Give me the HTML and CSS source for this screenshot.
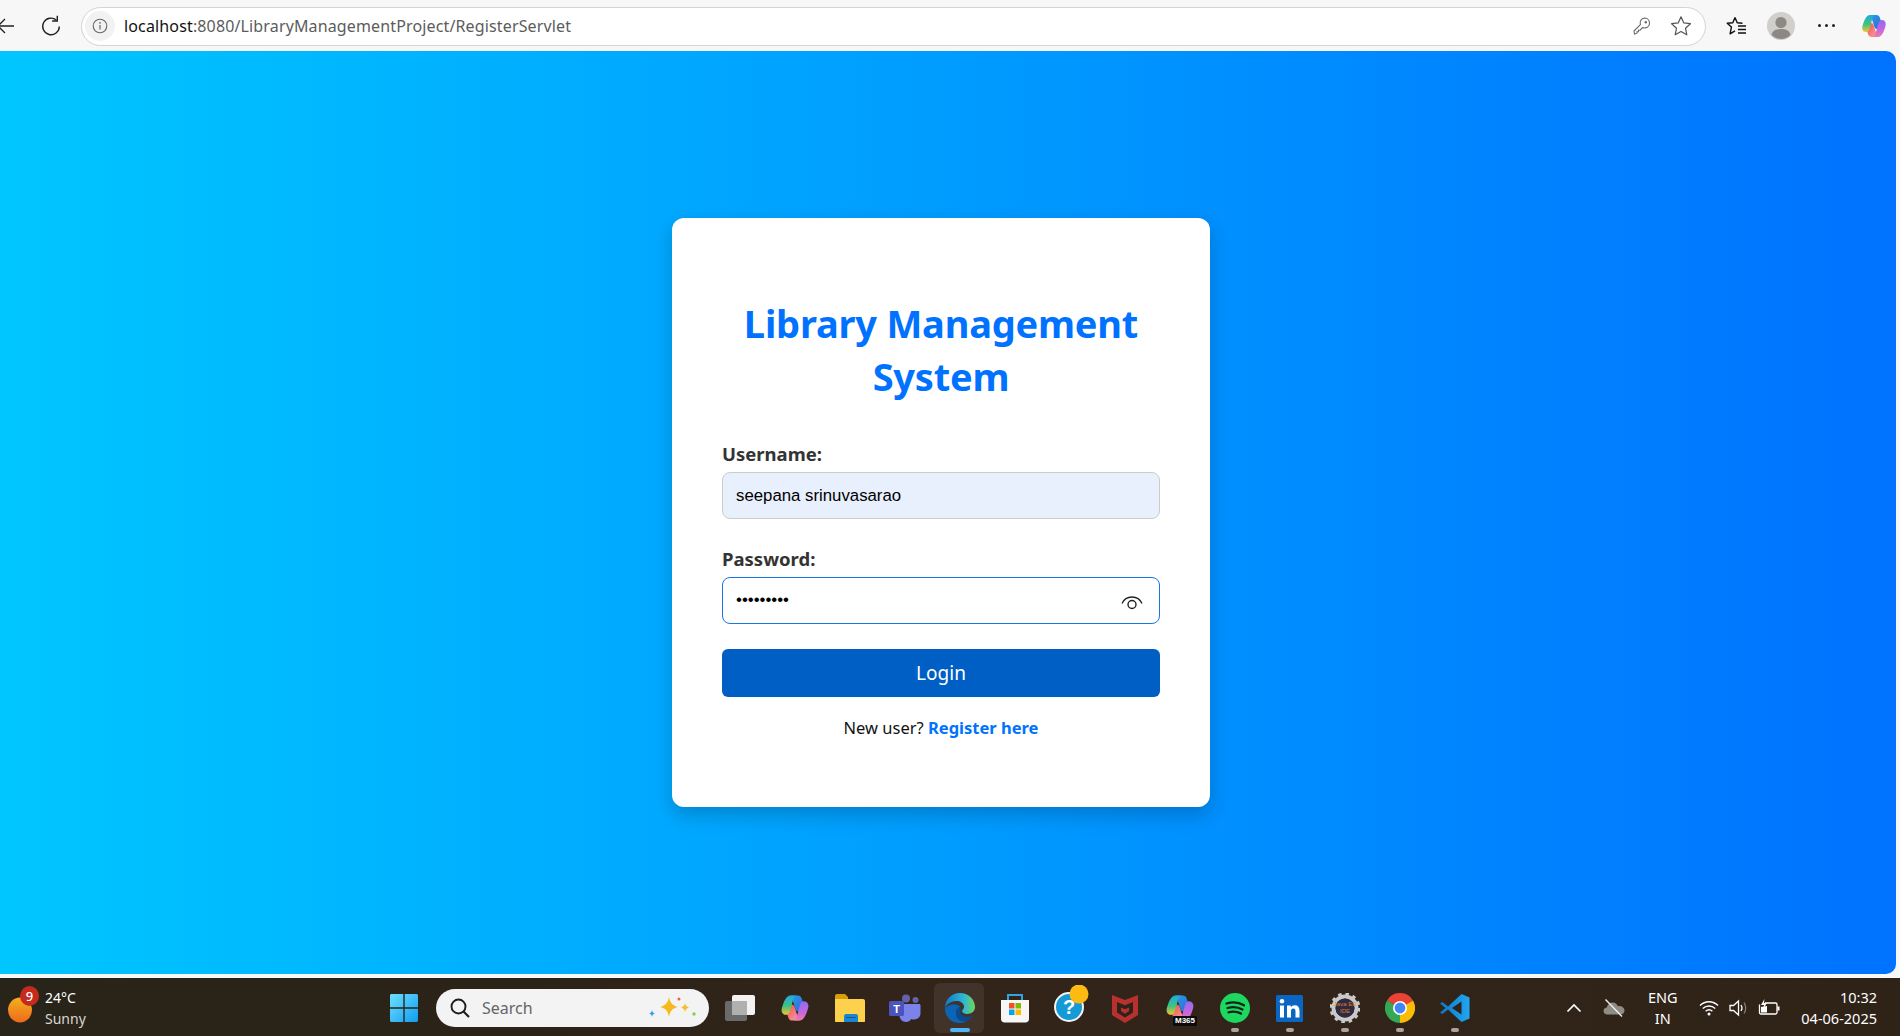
FILE: index.html
```html
<!DOCTYPE html>
<html lang="en">
<head>
<meta charset="utf-8">
<title>Library Management System</title>
<link rel="stylesheet" href="styles.css">
</head>
<body>
<svg class="defs" width="0" height="0">
  <defs>
    <linearGradient id="cop-left" x1="0" y1="0" x2="0" y2="1"><stop offset="0" stop-color="#1ea8e8"/><stop offset=".55" stop-color="#3fc47a"/><stop offset="1" stop-color="#f6c22e"/></linearGradient>
    <linearGradient id="cop-up" x1="0" y1="0" x2="1" y2="1"><stop offset="0" stop-color="#22a0ea"/><stop offset="1" stop-color="#3a5fd8"/></linearGradient>
    <linearGradient id="cop-right" x1="0" y1="0" x2="0" y2="1"><stop offset="0" stop-color="#8f6cf0"/><stop offset=".6" stop-color="#c766e0"/><stop offset="1" stop-color="#f27ba0"/></linearGradient>
    <linearGradient id="cop-low" x1="0" y1="0" x2="1" y2="1"><stop offset="0" stop-color="#ec4f3a"/><stop offset="1" stop-color="#f8a0b0"/></linearGradient>
    <linearGradient id="win" x1="0" y1="0" x2="1" y2="1"><stop offset="0" stop-color="#6fe0ff"/><stop offset="1" stop-color="#0f9cf0"/></linearGradient>
    <linearGradient id="sun" x1="0" y1="0" x2="0" y2="1"><stop offset="0" stop-color="#f2b01e"/><stop offset="1" stop-color="#ee6a1c"/></linearGradient>
    <linearGradient id="edge" x1="0" y1="0" x2="1" y2="0"><stop offset="0" stop-color="#1277c8"/><stop offset=".6" stop-color="#2cb5d8"/><stop offset="1" stop-color="#6fd65a"/></linearGradient>
    <linearGradient id="vs" x1="0" y1="0" x2="1" y2="0"><stop offset="0" stop-color="#0a78c8"/><stop offset="1" stop-color="#22a6f0"/></linearGradient>
    <g id="copilot">
      <path d="M10 2h6.500c1.700 0 2.800 1 3.300 2.500l3.200 10-6 1.500c-1.500 0-2.200-.8-2.600-2l-2.400-7.500C11.500 5 11 3.500 10 2z" fill="url(#cop-up)"/>
      <path d="M18 24h-6.500c-1.700 0-2.800-1-3.300-2.500L5 11.500l6-1.500c1.500 0 2.200.8 2.600 2l2.400 7.500c.5 1.500 1 3 2 4.500z" fill="url(#cop-low)"/>
      <path d="M10 2C6 2 4 8 2.500 13c-.8 3 .5 6 3.500 6 2 0 3-1.500 3.500-3l2.500-9c.5-2 1.500-5 3.500-5z" fill="url(#cop-left)"/>
      <path d="M18 24c4 0 6-6 7.500-11 .8-3-.5-6-3.500-6-2 0-3 1.500-3.500 3L16 19c-.5 2-1.500 5-3.500 5z" fill="url(#cop-right)"/>
    </g>
  </defs>
</svg>

<header class="toolbar">
  <button class="nav-btn back" aria-label="Back">
    <svg width="18" height="18" viewBox="0 0 18 18"><path d="M17 9H1M8 2 1 9l7 7" fill="none" stroke="#222" stroke-width="1.300"/></svg>
  </button>
  <button class="nav-btn reload" aria-label="Reload">
    <svg width="24" height="24" viewBox="0 0 24 24"><path d="M17.500 6.200A8.300 8.300 0 1 0 20.300 12.500" fill="none" stroke="#222" stroke-width="1.400"/><path d="M18.300 1.800V7h-5.200" fill="none" stroke="#222" stroke-width="1.400"/></svg>
  </button>
  <div class="address">
    <span class="site-info">
      <svg width="16" height="16" viewBox="0 0 16 16"><circle cx="8" cy="8" r="6.800" fill="none" stroke="#666" stroke-width="1.100"/><path d="M8 7v4.500" stroke="#666" stroke-width="1.200"/><circle cx="8" cy="4.800" r=".9" fill="#666"/></svg>
    </span>
    <span class="url"><span class="host">localhost</span>:8080/LibraryManagementProject/RegisterServlet</span>
    <span class="addr-icons">
      <svg width="20" height="20" viewBox="0 0 20 20"><path d="M12.500 2a5 5 0 0 1 1 9.900c-1 .2-2 0-2.800-.4L8 14.200H6.500v1.500H5v1.500L2.500 18 2 15l6.400-6.400A5 5 0 0 1 12.500 2z" fill="none" stroke="#6a6a6a" stroke-width="1.100"/><circle cx="13.800" cy="6.200" r="1.200" fill="#6a6a6a"/></svg>
      <svg width="22" height="22" viewBox="0 0 22 22"><path d="m11 1.800 2.800 6.100 6.600.8-4.900 4.500 1.300 6.600L11 16.500l-5.800 3.300 1.300-6.600L1.600 8.700l6.600-.8z" fill="none" stroke="#555" stroke-width="1.200" stroke-linejoin="round"/></svg>
    </span>
  </div>
  <div class="tool-icons">
    <svg class="fav" width="22" height="20" viewBox="0 0 22 20"><path d="m9 1.500 2.200 5.200 5.300.5M9 1.500 6.800 6.700l-5.600.6 4.200 3.800-1.300 6.800L9 14.800" fill="none" stroke="#111" stroke-width="1.400" stroke-linejoin="round"/><path d="M12 10h8M12 13.500h8M12 17h8" stroke="#111" stroke-width="1.400"/></svg>
    <svg class="avatar" width="28" height="28" viewBox="0 0 28 28"><circle cx="14" cy="14" r="14" fill="#d0cfcb"/><circle cx="14" cy="10.500" r="5.600" fill="#8c8985"/><path d="M4.500 23c1-4.500 4.500-6 9.500-6s8.500 1.500 9.500 6a13.500 13.500 0 0 1-19 0z" fill="#8c8985"/></svg>
    <span class="more"><i></i><i></i><i></i></span>
    <svg class="copilot-top" width="28" height="28" viewBox="0 0 28 26"><use href="#copilot"/></svg>
  </div>
</header>

<main class="page">
  <section class="card">
    <h1 class="title">Library Management System</h1>
    <form class="form">
      <div class="field">
        <label class="label" for="u">Username:</label>
        <input class="input autofilled" id="u" type="text" value="seepana srinuvasarao">
      </div>
      <div class="field">
        <label class="label" for="p">Password:</label>
        <div class="pw-wrap">
          <input class="input focused" id="p" type="password" value="srinu1234">
          <svg class="eye" width="22" height="16" viewBox="0 0 22 16"><path d="M1 8.500C3 4 7 2 11 2s8 2 10 6.500" fill="none" stroke="#222" stroke-width="1.300"/><circle cx="11" cy="9.500" r="4" fill="none" stroke="#222" stroke-width="1.400"/></svg>
        </div>
      </div>
      <button class="login" type="button">Login</button>
    </form>
    <p class="register">New user? <a href="#" class="register-link">Register here</a></p>
  </section>
</main>
<div class="strip"></div>

<footer class="taskbar">
  <div class="weather">
    <span class="sun-wrap">
      <svg width="24" height="26" viewBox="0 0 24 26"><ellipse cx="12" cy="13" rx="12" ry="12.500" fill="url(#sun)"/></svg>
      <b class="badge">9</b>
    </span>
    <span class="weather-text"><span class="temp">24°C</span><span class="cond">Sunny</span></span>
  </div>

  <span class="slot">
    <svg width="30" height="30" viewBox="0 0 30 30"><path d="M1 2.500C1 1.700 1.700 1 2.500 1H14.300v13.300H1zM15.700 1h11.800c.8 0 1.500.7 1.500 1.500v11.800H15.700zM1 15.700h13.300V29H2.500C1.700 29 1 28.300 1 27.500zM15.700 15.700H29v11.800c0 .8-.7 1.500-1.500 1.500H15.700z" fill="url(#win)"/></svg>
  </span>

  <div class="search">
    <svg width="22" height="22" viewBox="0 0 22 22"><circle cx="9.500" cy="9.500" r="7" fill="none" stroke="#1d1d1d" stroke-width="1.900"/><path d="m14.500 14.500 5.500 5.500" stroke="#1d1d1d" stroke-width="2.100"/></svg>
    <span class="search-text">Search</span>
    <svg class="sparkle" width="56" height="32" viewBox="0 0 50 32"><path d="M21 5c1 5.500 3 8 8.500 10-5.500 1.500-7.500 4.500-8.500 10-1-5.500-3-8.500-8.500-10C18 13 20 10.500 21 5z" fill="#f7b81e"/><path d="M37 11c.5 2.500 1.500 3.500 4 4.500-2.500 1-3.500 2-4 4.500-.5-2.500-1.500-3.500-4-4.500 2.500-1 3.500-2 4-4.500z" fill="#f4c030"/><path d="M4 18c.3 2 1 2.800 3 3.500-2 .7-2.700 1.500-3 3.500-.3-2-1-2.800-3-3.500 2-.7 2.700-1.500 3-3.500z" fill="#2aa3ee"/><circle cx="31" cy="7" r="1.500" fill="#e8663a"/><circle cx="46" cy="22" r="1.700" fill="#8cc84b"/></svg>
  </div>

  <div class="apps">
    <span class="slot">
      <svg width="32" height="32" viewBox="0 0 32 32"><rect x="1" y="9" width="22" height="20" rx="2" fill="#6a6a6a"/><rect x="8" y="3" width="23" height="20" rx="2" fill="#f2f2f2"/><rect x="8" y="9" width="15" height="14" fill="#b0b0b0"/></svg>
    </span>
    <span class="slot">
      <svg width="32" height="30" viewBox="0 0 28 26"><use href="#copilot"/></svg>
    </span>
    <span class="slot">
      <svg width="32" height="30" viewBox="0 0 32 30"><path d="M1 3c0-1 .7-2 2-2h8l3 3h0v5H1z" fill="#d69e0a"/><path d="M1 6h28c1 0 2 .8 2 2v20c0 .6-.4 1-1 1H2c-.6 0-1-.4-1-1z" fill="#fdd14b"/><path d="M10 23c0-1 .7-2 2-2h10c1.300 0 2 1 2 2v6H10z" fill="#1a86d0"/><path d="M12 24.500h10" stroke="#0c5a94" stroke-width="1"/></svg>
    </span>
    <span class="slot">
      <svg width="32" height="28" viewBox="0 0 32 28"><circle cx="17" cy="4.500" r="4" fill="#6264a7"/><circle cx="26.500" cy="6" r="3" fill="#6264a7"/><path d="M18 10h12c1 0 1.500.6 1.500 1.500v8c0 3.500-3 6-6.500 6-1 0-2-.2-2.800-.6-1 1.800-3 3-5.200 3-3.700 0-6.500-3-6.500-6.500V10z" fill="#7b83eb"/><rect x="0" y="7" width="15" height="15" rx="1.500" fill="#4b53bc"/><text class="teams-t" x="7.500" y="19">T</text></svg>
    </span>
    <span class="slot active">
      <svg width="32" height="32" viewBox="0 0 32 32"><path d="M1 16C1 7 8 1 16 1c8 0 15 6 15 14 0 4-3 7-8 7-3 0-5-1.500-5-3 0-1 2-1.500 2-4.500C20 11 16 9 12.500 9 7 9 3 12 1 16z" fill="url(#edge)"/><path d="M1 16c0 9 6 15 15 15 3 0 5-.7 7-2-5 1-11-1.500-11-8 0-3 2-5.500 4.500-6.500C14 13 11 11.500 8 12.500 4.500 13.500 2 15 1 16z" fill="#0c64b4"/><path d="M12 21c0 6 5 9 11 8 2-1.200 4-3 5-5-3 1.200-8 1-10-1-1.500-1.500-1.500-3-1.500-8.500-2.500 1-4.500 3.500-4.500 6.500z" fill="#0b4a90"/></svg>
      <i class="dot blue"></i>
    </span>
    <span class="slot">
      <svg width="30" height="30" viewBox="0 0 30 30"><path d="M8 7V2h14v5" fill="none" stroke="#2ea7e0" stroke-width="2"/><path d="M1 7h28v19c0 2-1.500 3.500-3.500 3.500h-21C2.500 29.500 1 28 1 26z" fill="#f6f6f6"/><rect x="9" y="10" width="5.500" height="5.500" fill="#f25022"/><rect x="15.500" y="10" width="5.500" height="5.500" fill="#7fba00"/><rect x="9" y="16.500" width="5.500" height="5.500" fill="#00a4ef"/><rect x="15.500" y="16.500" width="5.500" height="5.500" fill="#ffb900"/></svg>
    </span>
    <span class="slot">
      <svg class="help" width="38" height="38" viewBox="0 0 38 38"><circle cx="18" cy="22" r="14" fill="#169ad6" stroke="#f4f4f4" stroke-width="2"/><text class="help-q" x="18" y="29">?</text><circle cx="28" cy="9" r="9.500" fill="#fdbb12"/></svg>
    </span>
    <span class="slot">
      <svg width="30" height="32" viewBox="0 0 30 32"><path d="M2 3l13 5 13-5v20l-13 8-13-8z" fill="#b8312f"/><path d="M7 10l8 3.300L23 10v10.500l-8 5-8-5z" fill="#2e2318"/><path d="M11 15.500l4 1.800 4-1.800v3.500l-4 2.800-4-2.800z" fill="#b8312f"/></svg>
    </span>
    <span class="slot m365">
      <svg width="32" height="30" viewBox="0 0 28 26"><use href="#copilot"/></svg>
      <b class="m365-tag">M365</b>
    </span>
    <span class="slot">
      <svg width="30" height="30" viewBox="0 0 30 30"><circle cx="15" cy="15" r="15" fill="#1ed760"/><path d="M6.500 10.500c6-1.800 12.500-1.200 17.500 1.800M7.500 15c5-1.400 10.500-1 15 1.500M8.500 19.300c4.300-1.100 8.700-.8 12.500 1.300" fill="none" stroke="#14241a" stroke-width="2.300" stroke-linecap="round"/></svg>
      <i class="dot"></i>
    </span>
    <span class="slot">
      <svg width="27" height="27" viewBox="0 0 27 27"><rect width="27" height="27" rx="1.500" fill="#0a66c2"/><rect x="4" y="10.500" width="4" height="12" fill="#fff"/><circle cx="6" cy="6.300" r="2.300" fill="#fff"/><path d="M11 10.500h3.800v1.800c.8-1.300 2.200-2.100 4-2.100 3.200 0 4.700 2 4.700 5.500v6.800h-4v-6c0-1.800-.6-3-2.200-3s-2.300 1.300-2.300 3v6H11z" fill="#fff"/></svg>
      <i class="dot"></i>
    </span>
    <span class="slot">
      <svg width="30" height="30" viewBox="0 0 30 30"><circle cx="15" cy="15" r="11.500" fill="none" stroke="#c9c9c9" stroke-width="4"/><circle cx="15" cy="15" r="14" fill="none" stroke="#c9c9c9" stroke-width="3" stroke-dasharray="3.500 3.830"/><circle cx="15" cy="15" r="9.500" fill="#2d2a44"/><text class="java-t" x="15" y="13">Java EE</text><text class="java-t" x="15" y="20">IDE</text></svg>
      <i class="dot"></i>
    </span>
    <span class="slot">
      <svg width="30" height="30" viewBox="0 0 30 30"><path d="M15 15 2 7.500A15 15 0 0 1 28 7.500z" fill="#ea4335"/><path d="M15 15 28 7.500A15 15 0 0 1 15 30z" fill="#fbbc05"/><path d="M15 15 15 30A15 15 0 0 1 2 7.500z" fill="#34a853"/><circle cx="15" cy="15" r="7" fill="#fff"/><circle cx="15" cy="15" r="5.400" fill="#4285f4"/></svg>
      <i class="dot"></i>
    </span>
    <span class="slot">
      <svg width="30" height="30" viewBox="0 0 30 30"><path d="M21.500 1 29.500 4.500v21L21.500 29 8 16.500 2.500 21 0 19.500 5.500 15 0 10.500 2.500 9 8 13.500z" fill="url(#vs)"/><path d="M21.500 8.500 12 15l9.500 6.500z" fill="#2e2318"/></svg>
      <i class="dot"></i>
    </span>
  </div>

  <div class="tray">
    <svg class="t-chev" width="16" height="10" viewBox="0 0 16 10"><path d="m1.500 8.500 6.500-6.500 6.500 6.500" fill="none" stroke="#fff" stroke-width="1.700"/></svg>
    <svg class="t-cloud" width="22" height="20" viewBox="0 0 22 20"><path d="M4.500 16.500C2 16.500.5 14.800.5 13c0-2 1.500-3.300 3.300-3.400C4.400 6.500 6.800 4.500 9.500 4.500c2.600 0 4.600 1.500 5.400 3.700 3.500-.5 6.600 1.500 6.600 4.500 0 2.200-1.800 3.800-4 3.800z" fill="#8f8b85"/><path d="M2.500 1.500 19 18.500" stroke="#efefef" stroke-width="1.400"/></svg>
    <span class="lang"><span>ENG</span><span>IN</span></span>
    <svg class="t-wifi" width="20" height="16" viewBox="0 0 20 16"><path d="M1 5.500c5-5 13-5 18 0M3.800 8.500c3.500-3.300 8.900-3.300 12.400 0M6.600 11.300c2-1.800 4.800-1.800 6.800 0" fill="none" stroke="#fff" stroke-width="1.400"/><circle cx="10" cy="14" r="1.500" fill="#fff"/></svg>
    <svg class="t-vol" width="20" height="18" viewBox="0 0 20 18"><path d="M1 6.500h3.500L9.500 2v14l-5-4.500H1z" fill="none" stroke="#fff" stroke-width="1.300"/><path d="M12 6c1.200 1.800 1.200 4.200 0 6" fill="none" stroke="#fff" stroke-width="1.300"/><path d="M15 3.500c2 3.200 2 7.800 0 11" fill="none" stroke="#8a867f" stroke-width="1.200"/></svg>
    <svg class="t-bat" width="22" height="18" viewBox="0 0 22 18"><path d="M7 4h10.500c1 0 1.500.6 1.500 1.500v8c0 1-.5 1.500-1.500 1.500H3c-1 0-1.500-.5-1.500-1.500v-8" fill="none" stroke="#fff" stroke-width="1.300"/><rect x="19.500" y="7.500" width="2" height="4" fill="#fff"/><path d="M3 13.500V8l6-1v6.500z" fill="#fff"/><path d="M6.500 0 3 6h3l-1 4 4-6H6z" fill="#fff"/></svg>
    <span class="clock"><span>10:32</span><span>04-06-2025</span></span>
  </div>
</footer>
</body>
</html>
```

FILE: styles.css
```css
* { box-sizing: border-box; }
html, body { height: 100%; }
body {
  margin: 0;
  height: 1036px;
  overflow: hidden;
  display: flex;
  flex-direction: column;
  background: #f7f7f7;
  font-family: "Noto Sans", "Open Sans", sans-serif;
}
.defs { position: absolute; }

/* browser toolbar */
.toolbar {
  height: 51px;
  flex: none;
  display: flex;
  align-items: center;
  background: #f7f7f7;
}
.nav-btn {
  border: 0;
  padding: 0;
  background: none;
  display: flex;
  align-items: center;
  justify-content: center;
}
.nav-btn.back { width: 18px; margin-left: -3px; margin-right: 23px; }
.nav-btn.reload { width: 26px; margin-right: 17px; }
.address {
  width: 1625px;
  height: 39px;
  margin-top: 1px;
  background: #fff;
  border: 1px solid #d4d4d4;
  border-radius: 20px;
  display: flex;
  align-items: center;
  padding-left: 3px;
  padding-right: 13px;
}
.site-info {
  width: 30px;
  height: 30px;
  border-radius: 50%;
  background: #f2f2f2;
  display: flex;
  align-items: center;
  justify-content: center;
  margin-right: 9px;
}
.url { font-size: 16px; color: #5c5c5c; letter-spacing: .14px; font-family: "Noto Sans", sans-serif; }
.host { color: #111; }
.addr-icons { margin-left: auto; display: flex; align-items: center; gap: 18px; }
.tool-icons { flex: 1; display: flex; align-items: center; padding-left: 20px; }
.fav { margin-right: 19px; }
.avatar { margin-right: 23px; }
.more { display: flex; gap: 4px; margin-right: 25px; }
.more i { width: 3px; height: 3px; border-radius: 50%; background: #222; }

/* page */
.page {
  flex: 1;
  display: flex;
  align-items: center;
  justify-content: center;
  padding-right: 14px;
  background: linear-gradient(90deg, #00c6ff, #0072ff);
  border-radius: 0 10px 10px 0;
  margin-right: 4px;
}
.card {
  width: 538px;
  height: 589px;
  flex: none;
  background: #fff;
  border-radius: 12px;
  padding: 50px;
  box-shadow: 0 8px 20px rgba(0, 0, 0, .2);
}
.title {
  margin: 29px 0 37px;
  font-size: 38px;
  letter-spacing: -.2px;
  line-height: 53px;
  font-weight: 700;
  text-align: center;
  color: #0072ff;
}
.field { margin-bottom: 25.600px; }
.label {
  display: block;
  font-size: 18.500px;
  line-height: 27px;
  font-weight: 700;
  color: #333;
  margin-bottom: 5px;
}
.input {
  display: block;
  width: 100%;
  height: 47px;
  border: 1px solid #ccc;
  border-radius: 8px;
  padding: 0 13px;
  font-family: "Liberation Sans", Arial, sans-serif;
  font-size: 16.800px;
  color: #000;
  outline: none;
}
.autofilled { background: #e8f0fe; }
.focused { border-color: #1a73e8; background: #fff; }
.pw-wrap { position: relative; }
.eye { position: absolute; right: 17px; top: 18px; }
.login {
  display: block;
  width: 100%;
  height: 48px;
  border: 0;
  border-radius: 6px;
  background: #005fc4;
  color: #fff;
  font-family: "Noto Sans", sans-serif;
  font-size: 19px;
}
.register {
  margin: 19px 0 0;
  text-align: center;
  font-size: 16.500px;
  line-height: 24px;
  color: #111;
}
.register-link { color: #0072ff; font-weight: 700; text-decoration: none; }
.strip { height: 4px; flex: none; background: #f7f7f7; }

/* taskbar */
.taskbar {
  height: 58px;
  flex: none;
  display: flex;
  align-items: center;
  padding-top: 2px;
  background: linear-gradient(90deg, #292419 0, #2b2317 25%, #33241a 50%, #2f2318 100%);
  color: #fff;
}
.weather { width: 376px; display: flex; align-items: center; padding-left: 8px; }
.sun-wrap { position: relative; width: 24px; height: 26px; margin-right: 13px; margin-top: 4px; }
.sun-wrap svg { display: block; }
.badge {
  position: absolute;
  left: 12px;
  top: -11px;
  width: 19px;
  height: 20px;
  border-radius: 50%;
  background: #c42b1c;
  color: #fff;
  font-size: 13px;
  line-height: 20px;
  font-weight: 500;
  text-align: center;
}
.weather-text { display: flex; flex-direction: column; font-size: 14px; line-height: 21px; }
.cond { color: #d8d6d2; }
.slot {
  position: relative;
  width: 55px;
  height: 50px;
  flex: none;
  display: flex;
  align-items: center;
  justify-content: center;
}
.search {
  width: 273px;
  height: 38px;
  margin: 0 5px;
  background: #f3f3f3;
  border-radius: 19px;
  display: flex;
  align-items: center;
  padding-left: 13px;
  padding-right: 8px;
}
.search-text { color: #666; font-size: 16px; margin-left: 11px; }
.sparkle { margin-left: auto; }
.apps { display: flex; align-items: center; margin-left: -2px; }
.slot.active::before {
  content: "";
  position: absolute;
  left: 2px;
  right: 3px;
  top: 0;
  bottom: 0;
  background: rgba(255, 255, 255, .07);
  border-radius: 6px;
}
.slot svg { position: relative; }
.dot {
  position: absolute;
  left: 50%;
  bottom: 1px;
  width: 8px;
  height: 4px;
  margin-left: -4px;
  border-radius: 2px;
  background: #a8a5a0;
}
.dot.blue { width: 20px; margin-left: -10px; background: #4cb8f5; }
.m365-tag {
  position: absolute;
  left: 21px;
  top: 33px;
  background: #0b0b0b;
  color: #fff;
  font-family: "Liberation Sans", sans-serif;
  font-size: 8px;
  line-height: 10px;
  padding: 0 2px;
  border-radius: 1px;
}
.teams-t { fill: #fff; font-family: "Liberation Sans", sans-serif; font-size: 11px; font-weight: 700; text-anchor: middle; }
.help-q { fill: #fff; font-family: "Liberation Sans", sans-serif; font-size: 20px; font-weight: 700; text-anchor: middle; }
.java-t { fill: #e07b1a; font-family: "Liberation Sans", sans-serif; font-size: 6px; text-anchor: middle; }
.help { margin-top: -8px; }
.tray { flex: 1; display: flex; align-items: center; font-size: 14.500px; }
.t-chev { margin-left: 84px; }
.t-cloud { margin-left: 21px; }
.lang { display: flex; flex-direction: column; align-items: center; margin-left: 23px; line-height: 21px; }
.t-wifi { margin-left: 21px; }
.t-vol { margin-left: 10px; }
.t-bat { margin-left: 9px; }
.clock {
  margin-left: auto;
  margin-right: 23px;
  display: flex;
  flex-direction: column;
  align-items: flex-end;
  line-height: 21px;
}
```
